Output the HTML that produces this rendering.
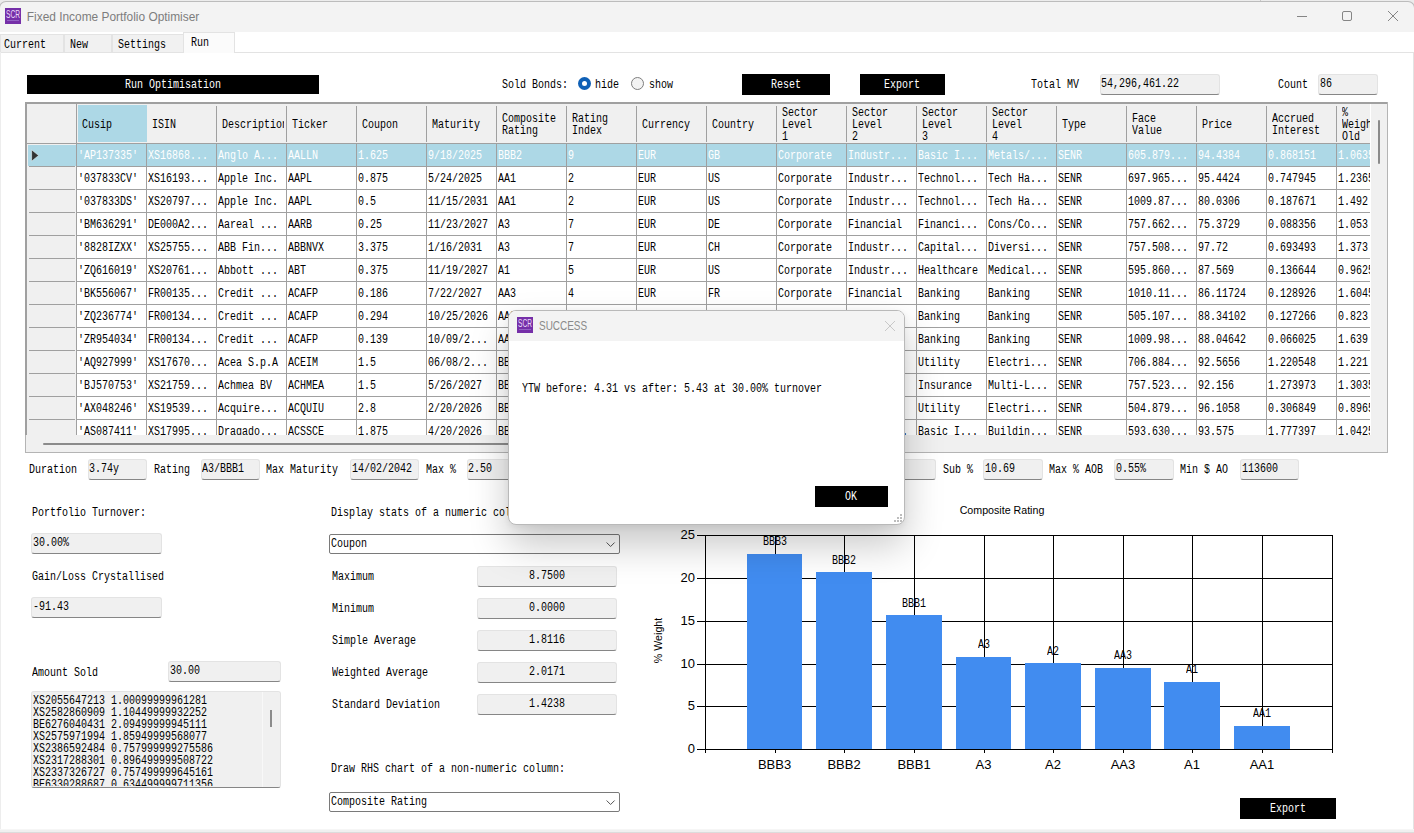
<!DOCTYPE html>
<html lang="en"><head><meta charset="utf-8"><title>Fixed Income Portfolio Optimiser</title>
<style>
html,body{margin:0;padding:0;}
body{width:1414px;height:833px;overflow:hidden;background:#fff;position:relative;font-family:"Liberation Mono",monospace;}
#app{position:absolute;left:0;top:0;width:1414px;height:833px;overflow:hidden;background:#fff;}
#app div,#app span,#app svg{position:absolute;box-sizing:border-box;}
.t{font:12px/12px "Liberation Mono",monospace;white-space:pre;transform:scaleX(.8332);transform-origin:0 0;color:#000;}
.s{font-family:"Liberation Sans",sans-serif;white-space:pre;color:#000;}
.tb{background:#f0f0f0;border:1px solid #e3e3e3;border-bottom-color:#868686;border-radius:3px;}
.cb{background:#fff;border:1px solid #7a7a7a;border-radius:2px;}
.hl{background:#a0a0a0;height:1px;}
.vl{background:#a0a0a0;width:1px;}
</style></head><body><div id="app">

<div style="left:0px;top:0px;width:1414px;height:12px;background:#ececec;"></div>
<div style="left:1260px;top:0px;width:1px;height:1px;background:#c8c8c8;"></div>
<div style="left:-1px;top:1px;width:1416px;height:40px;background:#f3f3f3;border:1px solid #bcbcbc;border-bottom:none;border-radius:7px 7px 0 0;"></div>
<div style="left:5px;top:8px;width:16px;height:16px;background:#752fa8;"><span class="s" style="left:1px;top:2px;font-size:10px;line-height:10px;color:#eadcf8;transform:scaleX(.66);transform-origin:0 0">SCR</span><div style="left:2px;top:12px;width:12px;height:1px;background:#9362c4"></div></div>
<span class="s" id="title" style="left:26.8px;top:10px;font-size:11.9px;line-height:15px;color:#7d7d7d">Fixed Income Portfolio Optimiser</span>
<svg style="left:1290px;top:5px" width="120" height="24" viewBox="0 0 120 24" fill="none" stroke="#858585" stroke-width="1">
<path d="M7 11.5h10"/><rect x="52.5" y="6.5" width="9" height="9" rx="1.5"/><path d="M98 6l10 10M108 6l-10 10"/></svg>
<div style="left:0px;top:32px;width:1414px;height:20px;background:#fff;"></div>
<div style="left:0px;top:34px;width:64px;height:18px;background:#f1f1f1;border:1px solid #e3e3e3;border-bottom:none;"></div>
<span class="t" style="left:3.9px;top:39px;">Current</span>
<div style="left:64px;top:34px;width:48px;height:18px;background:#f1f1f1;border:1px solid #e3e3e3;border-bottom:none;"></div>
<span class="t" style="left:70.1px;top:39px;">New</span>
<div style="left:112px;top:34px;width:72px;height:18px;background:#f1f1f1;border:1px solid #e3e3e3;border-bottom:none;"></div>
<span class="t" style="left:117.9px;top:39px;">Settings</span>
<div style="left:183px;top:32px;width:52px;height:21px;background:#fbfbfb;border:1px solid #e3e3e3;border-bottom:none;"></div>
<span class="t" style="left:190.5px;top:37px;">Run</span>
<div style="left:0px;top:52px;width:183px;height:1px;background:#e3e3e3;"></div>
<div style="left:235px;top:52px;width:1179px;height:1px;background:#e3e3e3;"></div>
<div style="left:0px;top:52px;width:1px;height:778px;background:#ededed;"></div>
<div style="left:1413px;top:52px;width:1px;height:778px;background:#e3e3e3;"></div>
<div style="left:0px;top:829px;width:1414px;height:1px;background:#f6f6f6;"></div>
<div style="left:0px;top:830px;width:1414px;height:2px;background:#f0f0f0;"></div>
<div style="left:0px;top:832px;width:1414px;height:1px;background:#dcdcdc;"></div>
<div style="left:27px;top:75px;width:292px;height:19px;background:#000;"></div>
<span class="t" style="left:124.5px;top:79px;color:#fff;">Run Optimisation</span>
<span class="t" style="left:502.3px;top:79px;">Sold Bonds:</span>
<div style="left:578px;top:77px;width:13px;height:13px;border-radius:50%;background:#0f60b6;"></div>
<div style="left:582px;top:81px;width:5px;height:5px;border-radius:50%;background:#fff;"></div>
<span class="t" style="left:595.3px;top:79px;">hide</span>
<div style="left:631px;top:77px;width:13px;height:13px;border-radius:50%;background:#f3f3f3;border:1px solid #7e7e7e;"></div>
<span class="t" style="left:649.3px;top:79px;">show</span>
<div style="left:742px;top:74px;width:88px;height:21px;background:#000;"></div>
<span class="t" style="left:770.5px;top:79px;color:#fff;">Reset</span>
<div style="left:860px;top:74px;width:85px;height:21px;background:#000;"></div>
<span class="t" style="left:884px;top:79px;color:#fff;">Export</span>
<span class="t" style="left:1031.3px;top:79px;">Total MV</span>
<div class="tb" style="left:1100px;top:74px;width:120px;height:21px;"></div>
<span class="t" style="left:1101.3px;top:78px;">54,296,461.22</span>
<span class="t" style="left:1278.3px;top:79px;">Count</span>
<div class="tb" style="left:1318px;top:74px;width:60px;height:21px;"></div>
<span class="t" style="left:1319.8px;top:78px;">86</span>
<div style="left:25px;top:102px;width:1363px;height:351px;background:#fff;"></div>
<div style="left:27px;top:104px;width:1343px;height:39px;background:#f0f0f0;"></div>
<div style="left:27px;top:143px;width:49px;height:292px;background:#f0f0f0;"></div>
<div style="left:78px;top:105px;width:69px;height:37px;background:#add8e6;"></div>
<div style="left:77px;top:144px;width:1293px;height:22px;background:#add8e6;"></div>
<div style="left:28px;top:145px;width:48px;height:21px;background:#add8e6;"></div>
<div class="vl" style="left:76px;top:104px;width:1px;height:39px;"></div>
<div class="vl" style="left:216px;top:106px;width:1px;height:36px;"></div>
<div class="vl" style="left:286px;top:106px;width:1px;height:36px;"></div>
<div class="vl" style="left:356px;top:106px;width:1px;height:36px;"></div>
<div class="vl" style="left:426px;top:106px;width:1px;height:36px;"></div>
<div class="vl" style="left:496px;top:106px;width:1px;height:36px;"></div>
<div class="vl" style="left:566px;top:106px;width:1px;height:36px;"></div>
<div class="vl" style="left:636px;top:106px;width:1px;height:36px;"></div>
<div class="vl" style="left:706px;top:106px;width:1px;height:36px;"></div>
<div class="vl" style="left:776px;top:106px;width:1px;height:36px;"></div>
<div class="vl" style="left:846px;top:106px;width:1px;height:36px;"></div>
<div class="vl" style="left:916px;top:106px;width:1px;height:36px;"></div>
<div class="vl" style="left:986px;top:106px;width:1px;height:36px;"></div>
<div class="vl" style="left:1056px;top:106px;width:1px;height:36px;"></div>
<div class="vl" style="left:1126px;top:106px;width:1px;height:36px;"></div>
<div class="vl" style="left:1196px;top:106px;width:1px;height:36px;"></div>
<div class="vl" style="left:1266px;top:106px;width:1px;height:36px;"></div>
<div class="vl" style="left:1336px;top:106px;width:1px;height:36px;"></div>
<div class="vl" style="left:76px;top:143px;width:1px;height:292px;"></div>
<div class="vl" style="left:146px;top:143px;width:1px;height:292px;"></div>
<div class="vl" style="left:216px;top:143px;width:1px;height:292px;"></div>
<div class="vl" style="left:286px;top:143px;width:1px;height:292px;"></div>
<div class="vl" style="left:356px;top:143px;width:1px;height:292px;"></div>
<div class="vl" style="left:426px;top:143px;width:1px;height:292px;"></div>
<div class="vl" style="left:496px;top:143px;width:1px;height:292px;"></div>
<div class="vl" style="left:566px;top:143px;width:1px;height:292px;"></div>
<div class="vl" style="left:636px;top:143px;width:1px;height:292px;"></div>
<div class="vl" style="left:706px;top:143px;width:1px;height:292px;"></div>
<div class="vl" style="left:776px;top:143px;width:1px;height:292px;"></div>
<div class="vl" style="left:846px;top:143px;width:1px;height:292px;"></div>
<div class="vl" style="left:916px;top:143px;width:1px;height:292px;"></div>
<div class="vl" style="left:986px;top:143px;width:1px;height:292px;"></div>
<div class="vl" style="left:1056px;top:143px;width:1px;height:292px;"></div>
<div class="vl" style="left:1126px;top:143px;width:1px;height:292px;"></div>
<div class="vl" style="left:1196px;top:143px;width:1px;height:292px;"></div>
<div class="vl" style="left:1266px;top:143px;width:1px;height:292px;"></div>
<div class="vl" style="left:1336px;top:143px;width:1px;height:292px;"></div>
<div class="hl" style="left:27px;top:143px;width:1343px;height:1px;"></div>
<div class="hl" style="left:76px;top:166px;width:1294px;height:1px;"></div>
<div class="hl" style="left:29px;top:166px;width:46px;height:1px;"></div>
<div class="hl" style="left:76px;top:189px;width:1294px;height:1px;"></div>
<div class="hl" style="left:29px;top:189px;width:46px;height:1px;"></div>
<div class="hl" style="left:76px;top:212px;width:1294px;height:1px;"></div>
<div class="hl" style="left:29px;top:212px;width:46px;height:1px;"></div>
<div class="hl" style="left:76px;top:235px;width:1294px;height:1px;"></div>
<div class="hl" style="left:29px;top:235px;width:46px;height:1px;"></div>
<div class="hl" style="left:76px;top:258px;width:1294px;height:1px;"></div>
<div class="hl" style="left:29px;top:258px;width:46px;height:1px;"></div>
<div class="hl" style="left:76px;top:281px;width:1294px;height:1px;"></div>
<div class="hl" style="left:29px;top:281px;width:46px;height:1px;"></div>
<div class="hl" style="left:76px;top:304px;width:1294px;height:1px;"></div>
<div class="hl" style="left:29px;top:304px;width:46px;height:1px;"></div>
<div class="hl" style="left:76px;top:327px;width:1294px;height:1px;"></div>
<div class="hl" style="left:29px;top:327px;width:46px;height:1px;"></div>
<div class="hl" style="left:76px;top:350px;width:1294px;height:1px;"></div>
<div class="hl" style="left:29px;top:350px;width:46px;height:1px;"></div>
<div class="hl" style="left:76px;top:373px;width:1294px;height:1px;"></div>
<div class="hl" style="left:29px;top:373px;width:46px;height:1px;"></div>
<div class="hl" style="left:76px;top:396px;width:1294px;height:1px;"></div>
<div class="hl" style="left:29px;top:396px;width:46px;height:1px;"></div>
<div class="hl" style="left:76px;top:419px;width:1294px;height:1px;"></div>
<div class="hl" style="left:29px;top:419px;width:46px;height:1px;"></div>
<svg style="left:31px;top:149px" width="9" height="13" viewBox="0 0 9 13"><path d="M0.6 0.8L7.6 6.5L0.6 12.2z" fill="#333" stroke="#e4f2f7" stroke-width="0.6"/></svg>
<div style="left:77px;top:104px;width:67px;height:39px;overflow:hidden"><span class="t" style="left:5px;top:15px">Cusip</span></div>
<div style="left:147px;top:104px;width:67px;height:39px;overflow:hidden"><span class="t" style="left:5px;top:15px">ISIN</span></div>
<div style="left:217px;top:104px;width:67px;height:39px;overflow:hidden"><span class="t" style="left:5px;top:15px">Description</span></div>
<div style="left:287px;top:104px;width:67px;height:39px;overflow:hidden"><span class="t" style="left:5px;top:15px">Ticker</span></div>
<div style="left:357px;top:104px;width:67px;height:39px;overflow:hidden"><span class="t" style="left:5px;top:15px">Coupon</span></div>
<div style="left:427px;top:104px;width:67px;height:39px;overflow:hidden"><span class="t" style="left:5px;top:15px">Maturity</span></div>
<div style="left:497px;top:104px;width:67px;height:39px;overflow:hidden"><span class="t" style="left:5px;top:9px">Composite</span><span class="t" style="left:5px;top:21px">Rating</span></div>
<div style="left:567px;top:104px;width:67px;height:39px;overflow:hidden"><span class="t" style="left:5px;top:9px">Rating</span><span class="t" style="left:5px;top:21px">Index</span></div>
<div style="left:637px;top:104px;width:67px;height:39px;overflow:hidden"><span class="t" style="left:5px;top:15px">Currency</span></div>
<div style="left:707px;top:104px;width:67px;height:39px;overflow:hidden"><span class="t" style="left:5px;top:15px">Country</span></div>
<div style="left:777px;top:104px;width:67px;height:39px;overflow:hidden"><span class="t" style="left:5px;top:3px">Sector</span><span class="t" style="left:5px;top:15px">Level</span><span class="t" style="left:5px;top:27px">1</span></div>
<div style="left:847px;top:104px;width:67px;height:39px;overflow:hidden"><span class="t" style="left:5px;top:3px">Sector</span><span class="t" style="left:5px;top:15px">Level</span><span class="t" style="left:5px;top:27px">2</span></div>
<div style="left:917px;top:104px;width:67px;height:39px;overflow:hidden"><span class="t" style="left:5px;top:3px">Sector</span><span class="t" style="left:5px;top:15px">Level</span><span class="t" style="left:5px;top:27px">3</span></div>
<div style="left:987px;top:104px;width:67px;height:39px;overflow:hidden"><span class="t" style="left:5px;top:3px">Sector</span><span class="t" style="left:5px;top:15px">Level</span><span class="t" style="left:5px;top:27px">4</span></div>
<div style="left:1057px;top:104px;width:67px;height:39px;overflow:hidden"><span class="t" style="left:5px;top:15px">Type</span></div>
<div style="left:1127px;top:104px;width:67px;height:39px;overflow:hidden"><span class="t" style="left:5px;top:9px">Face</span><span class="t" style="left:5px;top:21px">Value</span></div>
<div style="left:1197px;top:104px;width:67px;height:39px;overflow:hidden"><span class="t" style="left:5px;top:15px">Price</span></div>
<div style="left:1267px;top:104px;width:67px;height:39px;overflow:hidden"><span class="t" style="left:5px;top:9px">Accrued</span><span class="t" style="left:5px;top:21px">Interest</span></div>
<div style="left:1337px;top:104px;width:33px;height:39px;overflow:hidden"><span class="t" style="left:5px;top:3px">%</span><span class="t" style="left:5px;top:15px">Weight</span><span class="t" style="left:5px;top:27px">Old</span></div>
<div style="left:77px;top:144px;width:69px;height:22px;overflow:hidden"><span class="t" style="left:1.3px;top:6px;color:#fff">'AP137335'</span></div>
<div style="left:147px;top:144px;width:69px;height:22px;overflow:hidden"><span class="t" style="left:1.3px;top:6px;color:#fff">XS16868...</span></div>
<div style="left:217px;top:144px;width:69px;height:22px;overflow:hidden"><span class="t" style="left:1.3px;top:6px;color:#fff">Anglo A...</span></div>
<div style="left:287px;top:144px;width:69px;height:22px;overflow:hidden"><span class="t" style="left:1.3px;top:6px;color:#fff">AALLN</span></div>
<div style="left:357px;top:144px;width:69px;height:22px;overflow:hidden"><span class="t" style="left:1.3px;top:6px;color:#fff">1.625</span></div>
<div style="left:427px;top:144px;width:69px;height:22px;overflow:hidden"><span class="t" style="left:1.3px;top:6px;color:#fff">9/18/2025</span></div>
<div style="left:497px;top:144px;width:69px;height:22px;overflow:hidden"><span class="t" style="left:1.3px;top:6px;color:#fff">BBB2</span></div>
<div style="left:567px;top:144px;width:69px;height:22px;overflow:hidden"><span class="t" style="left:1.3px;top:6px;color:#fff">9</span></div>
<div style="left:637px;top:144px;width:69px;height:22px;overflow:hidden"><span class="t" style="left:1.3px;top:6px;color:#fff">EUR</span></div>
<div style="left:707px;top:144px;width:69px;height:22px;overflow:hidden"><span class="t" style="left:1.3px;top:6px;color:#fff">GB</span></div>
<div style="left:777px;top:144px;width:69px;height:22px;overflow:hidden"><span class="t" style="left:1.3px;top:6px;color:#fff">Corporate</span></div>
<div style="left:847px;top:144px;width:69px;height:22px;overflow:hidden"><span class="t" style="left:1.3px;top:6px;color:#fff">Industr...</span></div>
<div style="left:917px;top:144px;width:69px;height:22px;overflow:hidden"><span class="t" style="left:1.3px;top:6px;color:#fff">Basic I...</span></div>
<div style="left:987px;top:144px;width:69px;height:22px;overflow:hidden"><span class="t" style="left:1.3px;top:6px;color:#fff">Metals/...</span></div>
<div style="left:1057px;top:144px;width:69px;height:22px;overflow:hidden"><span class="t" style="left:1.3px;top:6px;color:#fff">SENR</span></div>
<div style="left:1127px;top:144px;width:69px;height:22px;overflow:hidden"><span class="t" style="left:1.3px;top:6px;color:#fff">605.879...</span></div>
<div style="left:1197px;top:144px;width:69px;height:22px;overflow:hidden"><span class="t" style="left:1.3px;top:6px;color:#fff">94.4384</span></div>
<div style="left:1267px;top:144px;width:69px;height:22px;overflow:hidden"><span class="t" style="left:1.3px;top:6px;color:#fff">0.868151</span></div>
<div style="left:1337px;top:144px;width:33px;height:22px;overflow:hidden"><span class="t" style="left:1.3px;top:6px;color:#fff">1.0635</span></div>
<div style="left:77px;top:167px;width:69px;height:22px;overflow:hidden"><span class="t" style="left:1.3px;top:6px;color:#000">'037833CV'</span></div>
<div style="left:147px;top:167px;width:69px;height:22px;overflow:hidden"><span class="t" style="left:1.3px;top:6px;color:#000">XS16193...</span></div>
<div style="left:217px;top:167px;width:69px;height:22px;overflow:hidden"><span class="t" style="left:1.3px;top:6px;color:#000">Apple Inc.</span></div>
<div style="left:287px;top:167px;width:69px;height:22px;overflow:hidden"><span class="t" style="left:1.3px;top:6px;color:#000">AAPL</span></div>
<div style="left:357px;top:167px;width:69px;height:22px;overflow:hidden"><span class="t" style="left:1.3px;top:6px;color:#000">0.875</span></div>
<div style="left:427px;top:167px;width:69px;height:22px;overflow:hidden"><span class="t" style="left:1.3px;top:6px;color:#000">5/24/2025</span></div>
<div style="left:497px;top:167px;width:69px;height:22px;overflow:hidden"><span class="t" style="left:1.3px;top:6px;color:#000">AA1</span></div>
<div style="left:567px;top:167px;width:69px;height:22px;overflow:hidden"><span class="t" style="left:1.3px;top:6px;color:#000">2</span></div>
<div style="left:637px;top:167px;width:69px;height:22px;overflow:hidden"><span class="t" style="left:1.3px;top:6px;color:#000">EUR</span></div>
<div style="left:707px;top:167px;width:69px;height:22px;overflow:hidden"><span class="t" style="left:1.3px;top:6px;color:#000">US</span></div>
<div style="left:777px;top:167px;width:69px;height:22px;overflow:hidden"><span class="t" style="left:1.3px;top:6px;color:#000">Corporate</span></div>
<div style="left:847px;top:167px;width:69px;height:22px;overflow:hidden"><span class="t" style="left:1.3px;top:6px;color:#000">Industr...</span></div>
<div style="left:917px;top:167px;width:69px;height:22px;overflow:hidden"><span class="t" style="left:1.3px;top:6px;color:#000">Technol...</span></div>
<div style="left:987px;top:167px;width:69px;height:22px;overflow:hidden"><span class="t" style="left:1.3px;top:6px;color:#000">Tech Ha...</span></div>
<div style="left:1057px;top:167px;width:69px;height:22px;overflow:hidden"><span class="t" style="left:1.3px;top:6px;color:#000">SENR</span></div>
<div style="left:1127px;top:167px;width:69px;height:22px;overflow:hidden"><span class="t" style="left:1.3px;top:6px;color:#000">697.965...</span></div>
<div style="left:1197px;top:167px;width:69px;height:22px;overflow:hidden"><span class="t" style="left:1.3px;top:6px;color:#000">95.4424</span></div>
<div style="left:1267px;top:167px;width:69px;height:22px;overflow:hidden"><span class="t" style="left:1.3px;top:6px;color:#000">0.747945</span></div>
<div style="left:1337px;top:167px;width:33px;height:22px;overflow:hidden"><span class="t" style="left:1.3px;top:6px;color:#000">1.2365</span></div>
<div style="left:77px;top:190px;width:69px;height:22px;overflow:hidden"><span class="t" style="left:1.3px;top:6px;color:#000">'037833DS'</span></div>
<div style="left:147px;top:190px;width:69px;height:22px;overflow:hidden"><span class="t" style="left:1.3px;top:6px;color:#000">XS20797...</span></div>
<div style="left:217px;top:190px;width:69px;height:22px;overflow:hidden"><span class="t" style="left:1.3px;top:6px;color:#000">Apple Inc.</span></div>
<div style="left:287px;top:190px;width:69px;height:22px;overflow:hidden"><span class="t" style="left:1.3px;top:6px;color:#000">AAPL</span></div>
<div style="left:357px;top:190px;width:69px;height:22px;overflow:hidden"><span class="t" style="left:1.3px;top:6px;color:#000">0.5</span></div>
<div style="left:427px;top:190px;width:69px;height:22px;overflow:hidden"><span class="t" style="left:1.3px;top:6px;color:#000">11/15/2031</span></div>
<div style="left:497px;top:190px;width:69px;height:22px;overflow:hidden"><span class="t" style="left:1.3px;top:6px;color:#000">AA1</span></div>
<div style="left:567px;top:190px;width:69px;height:22px;overflow:hidden"><span class="t" style="left:1.3px;top:6px;color:#000">2</span></div>
<div style="left:637px;top:190px;width:69px;height:22px;overflow:hidden"><span class="t" style="left:1.3px;top:6px;color:#000">EUR</span></div>
<div style="left:707px;top:190px;width:69px;height:22px;overflow:hidden"><span class="t" style="left:1.3px;top:6px;color:#000">US</span></div>
<div style="left:777px;top:190px;width:69px;height:22px;overflow:hidden"><span class="t" style="left:1.3px;top:6px;color:#000">Corporate</span></div>
<div style="left:847px;top:190px;width:69px;height:22px;overflow:hidden"><span class="t" style="left:1.3px;top:6px;color:#000">Industr...</span></div>
<div style="left:917px;top:190px;width:69px;height:22px;overflow:hidden"><span class="t" style="left:1.3px;top:6px;color:#000">Technol...</span></div>
<div style="left:987px;top:190px;width:69px;height:22px;overflow:hidden"><span class="t" style="left:1.3px;top:6px;color:#000">Tech Ha...</span></div>
<div style="left:1057px;top:190px;width:69px;height:22px;overflow:hidden"><span class="t" style="left:1.3px;top:6px;color:#000">SENR</span></div>
<div style="left:1127px;top:190px;width:69px;height:22px;overflow:hidden"><span class="t" style="left:1.3px;top:6px;color:#000">1009.87...</span></div>
<div style="left:1197px;top:190px;width:69px;height:22px;overflow:hidden"><span class="t" style="left:1.3px;top:6px;color:#000">80.0306</span></div>
<div style="left:1267px;top:190px;width:69px;height:22px;overflow:hidden"><span class="t" style="left:1.3px;top:6px;color:#000">0.187671</span></div>
<div style="left:1337px;top:190px;width:33px;height:22px;overflow:hidden"><span class="t" style="left:1.3px;top:6px;color:#000">1.492</span></div>
<div style="left:77px;top:213px;width:69px;height:22px;overflow:hidden"><span class="t" style="left:1.3px;top:6px;color:#000">'BM636291'</span></div>
<div style="left:147px;top:213px;width:69px;height:22px;overflow:hidden"><span class="t" style="left:1.3px;top:6px;color:#000">DE000A2...</span></div>
<div style="left:217px;top:213px;width:69px;height:22px;overflow:hidden"><span class="t" style="left:1.3px;top:6px;color:#000">Aareal ...</span></div>
<div style="left:287px;top:213px;width:69px;height:22px;overflow:hidden"><span class="t" style="left:1.3px;top:6px;color:#000">AARB</span></div>
<div style="left:357px;top:213px;width:69px;height:22px;overflow:hidden"><span class="t" style="left:1.3px;top:6px;color:#000">0.25</span></div>
<div style="left:427px;top:213px;width:69px;height:22px;overflow:hidden"><span class="t" style="left:1.3px;top:6px;color:#000">11/23/2027</span></div>
<div style="left:497px;top:213px;width:69px;height:22px;overflow:hidden"><span class="t" style="left:1.3px;top:6px;color:#000">A3</span></div>
<div style="left:567px;top:213px;width:69px;height:22px;overflow:hidden"><span class="t" style="left:1.3px;top:6px;color:#000">7</span></div>
<div style="left:637px;top:213px;width:69px;height:22px;overflow:hidden"><span class="t" style="left:1.3px;top:6px;color:#000">EUR</span></div>
<div style="left:707px;top:213px;width:69px;height:22px;overflow:hidden"><span class="t" style="left:1.3px;top:6px;color:#000">DE</span></div>
<div style="left:777px;top:213px;width:69px;height:22px;overflow:hidden"><span class="t" style="left:1.3px;top:6px;color:#000">Corporate</span></div>
<div style="left:847px;top:213px;width:69px;height:22px;overflow:hidden"><span class="t" style="left:1.3px;top:6px;color:#000">Financial</span></div>
<div style="left:917px;top:213px;width:69px;height:22px;overflow:hidden"><span class="t" style="left:1.3px;top:6px;color:#000">Financi...</span></div>
<div style="left:987px;top:213px;width:69px;height:22px;overflow:hidden"><span class="t" style="left:1.3px;top:6px;color:#000">Cons/Co...</span></div>
<div style="left:1057px;top:213px;width:69px;height:22px;overflow:hidden"><span class="t" style="left:1.3px;top:6px;color:#000">SENR</span></div>
<div style="left:1127px;top:213px;width:69px;height:22px;overflow:hidden"><span class="t" style="left:1.3px;top:6px;color:#000">757.662...</span></div>
<div style="left:1197px;top:213px;width:69px;height:22px;overflow:hidden"><span class="t" style="left:1.3px;top:6px;color:#000">75.3729</span></div>
<div style="left:1267px;top:213px;width:69px;height:22px;overflow:hidden"><span class="t" style="left:1.3px;top:6px;color:#000">0.088356</span></div>
<div style="left:1337px;top:213px;width:33px;height:22px;overflow:hidden"><span class="t" style="left:1.3px;top:6px;color:#000">1.053</span></div>
<div style="left:77px;top:236px;width:69px;height:22px;overflow:hidden"><span class="t" style="left:1.3px;top:6px;color:#000">'8828IZXX'</span></div>
<div style="left:147px;top:236px;width:69px;height:22px;overflow:hidden"><span class="t" style="left:1.3px;top:6px;color:#000">XS25755...</span></div>
<div style="left:217px;top:236px;width:69px;height:22px;overflow:hidden"><span class="t" style="left:1.3px;top:6px;color:#000">ABB Fin...</span></div>
<div style="left:287px;top:236px;width:69px;height:22px;overflow:hidden"><span class="t" style="left:1.3px;top:6px;color:#000">ABBNVX</span></div>
<div style="left:357px;top:236px;width:69px;height:22px;overflow:hidden"><span class="t" style="left:1.3px;top:6px;color:#000">3.375</span></div>
<div style="left:427px;top:236px;width:69px;height:22px;overflow:hidden"><span class="t" style="left:1.3px;top:6px;color:#000">1/16/2031</span></div>
<div style="left:497px;top:236px;width:69px;height:22px;overflow:hidden"><span class="t" style="left:1.3px;top:6px;color:#000">A3</span></div>
<div style="left:567px;top:236px;width:69px;height:22px;overflow:hidden"><span class="t" style="left:1.3px;top:6px;color:#000">7</span></div>
<div style="left:637px;top:236px;width:69px;height:22px;overflow:hidden"><span class="t" style="left:1.3px;top:6px;color:#000">EUR</span></div>
<div style="left:707px;top:236px;width:69px;height:22px;overflow:hidden"><span class="t" style="left:1.3px;top:6px;color:#000">CH</span></div>
<div style="left:777px;top:236px;width:69px;height:22px;overflow:hidden"><span class="t" style="left:1.3px;top:6px;color:#000">Corporate</span></div>
<div style="left:847px;top:236px;width:69px;height:22px;overflow:hidden"><span class="t" style="left:1.3px;top:6px;color:#000">Industr...</span></div>
<div style="left:917px;top:236px;width:69px;height:22px;overflow:hidden"><span class="t" style="left:1.3px;top:6px;color:#000">Capital...</span></div>
<div style="left:987px;top:236px;width:69px;height:22px;overflow:hidden"><span class="t" style="left:1.3px;top:6px;color:#000">Diversi...</span></div>
<div style="left:1057px;top:236px;width:69px;height:22px;overflow:hidden"><span class="t" style="left:1.3px;top:6px;color:#000">SENR</span></div>
<div style="left:1127px;top:236px;width:69px;height:22px;overflow:hidden"><span class="t" style="left:1.3px;top:6px;color:#000">757.508...</span></div>
<div style="left:1197px;top:236px;width:69px;height:22px;overflow:hidden"><span class="t" style="left:1.3px;top:6px;color:#000">97.72</span></div>
<div style="left:1267px;top:236px;width:69px;height:22px;overflow:hidden"><span class="t" style="left:1.3px;top:6px;color:#000">0.693493</span></div>
<div style="left:1337px;top:236px;width:33px;height:22px;overflow:hidden"><span class="t" style="left:1.3px;top:6px;color:#000">1.373</span></div>
<div style="left:77px;top:259px;width:69px;height:22px;overflow:hidden"><span class="t" style="left:1.3px;top:6px;color:#000">'ZQ616019'</span></div>
<div style="left:147px;top:259px;width:69px;height:22px;overflow:hidden"><span class="t" style="left:1.3px;top:6px;color:#000">XS20761...</span></div>
<div style="left:217px;top:259px;width:69px;height:22px;overflow:hidden"><span class="t" style="left:1.3px;top:6px;color:#000">Abbott ...</span></div>
<div style="left:287px;top:259px;width:69px;height:22px;overflow:hidden"><span class="t" style="left:1.3px;top:6px;color:#000">ABT</span></div>
<div style="left:357px;top:259px;width:69px;height:22px;overflow:hidden"><span class="t" style="left:1.3px;top:6px;color:#000">0.375</span></div>
<div style="left:427px;top:259px;width:69px;height:22px;overflow:hidden"><span class="t" style="left:1.3px;top:6px;color:#000">11/19/2027</span></div>
<div style="left:497px;top:259px;width:69px;height:22px;overflow:hidden"><span class="t" style="left:1.3px;top:6px;color:#000">A1</span></div>
<div style="left:567px;top:259px;width:69px;height:22px;overflow:hidden"><span class="t" style="left:1.3px;top:6px;color:#000">5</span></div>
<div style="left:637px;top:259px;width:69px;height:22px;overflow:hidden"><span class="t" style="left:1.3px;top:6px;color:#000">EUR</span></div>
<div style="left:707px;top:259px;width:69px;height:22px;overflow:hidden"><span class="t" style="left:1.3px;top:6px;color:#000">US</span></div>
<div style="left:777px;top:259px;width:69px;height:22px;overflow:hidden"><span class="t" style="left:1.3px;top:6px;color:#000">Corporate</span></div>
<div style="left:847px;top:259px;width:69px;height:22px;overflow:hidden"><span class="t" style="left:1.3px;top:6px;color:#000">Industr...</span></div>
<div style="left:917px;top:259px;width:69px;height:22px;overflow:hidden"><span class="t" style="left:1.3px;top:6px;color:#000">Healthcare</span></div>
<div style="left:987px;top:259px;width:69px;height:22px;overflow:hidden"><span class="t" style="left:1.3px;top:6px;color:#000">Medical...</span></div>
<div style="left:1057px;top:259px;width:69px;height:22px;overflow:hidden"><span class="t" style="left:1.3px;top:6px;color:#000">SENR</span></div>
<div style="left:1127px;top:259px;width:69px;height:22px;overflow:hidden"><span class="t" style="left:1.3px;top:6px;color:#000">595.860...</span></div>
<div style="left:1197px;top:259px;width:69px;height:22px;overflow:hidden"><span class="t" style="left:1.3px;top:6px;color:#000">87.569</span></div>
<div style="left:1267px;top:259px;width:69px;height:22px;overflow:hidden"><span class="t" style="left:1.3px;top:6px;color:#000">0.136644</span></div>
<div style="left:1337px;top:259px;width:33px;height:22px;overflow:hidden"><span class="t" style="left:1.3px;top:6px;color:#000">0.9625</span></div>
<div style="left:77px;top:282px;width:69px;height:22px;overflow:hidden"><span class="t" style="left:1.3px;top:6px;color:#000">'BK556067'</span></div>
<div style="left:147px;top:282px;width:69px;height:22px;overflow:hidden"><span class="t" style="left:1.3px;top:6px;color:#000">FR00135...</span></div>
<div style="left:217px;top:282px;width:69px;height:22px;overflow:hidden"><span class="t" style="left:1.3px;top:6px;color:#000">Credit ...</span></div>
<div style="left:287px;top:282px;width:69px;height:22px;overflow:hidden"><span class="t" style="left:1.3px;top:6px;color:#000">ACAFP</span></div>
<div style="left:357px;top:282px;width:69px;height:22px;overflow:hidden"><span class="t" style="left:1.3px;top:6px;color:#000">0.186</span></div>
<div style="left:427px;top:282px;width:69px;height:22px;overflow:hidden"><span class="t" style="left:1.3px;top:6px;color:#000">7/22/2027</span></div>
<div style="left:497px;top:282px;width:69px;height:22px;overflow:hidden"><span class="t" style="left:1.3px;top:6px;color:#000">AA3</span></div>
<div style="left:567px;top:282px;width:69px;height:22px;overflow:hidden"><span class="t" style="left:1.3px;top:6px;color:#000">4</span></div>
<div style="left:637px;top:282px;width:69px;height:22px;overflow:hidden"><span class="t" style="left:1.3px;top:6px;color:#000">EUR</span></div>
<div style="left:707px;top:282px;width:69px;height:22px;overflow:hidden"><span class="t" style="left:1.3px;top:6px;color:#000">FR</span></div>
<div style="left:777px;top:282px;width:69px;height:22px;overflow:hidden"><span class="t" style="left:1.3px;top:6px;color:#000">Corporate</span></div>
<div style="left:847px;top:282px;width:69px;height:22px;overflow:hidden"><span class="t" style="left:1.3px;top:6px;color:#000">Financial</span></div>
<div style="left:917px;top:282px;width:69px;height:22px;overflow:hidden"><span class="t" style="left:1.3px;top:6px;color:#000">Banking</span></div>
<div style="left:987px;top:282px;width:69px;height:22px;overflow:hidden"><span class="t" style="left:1.3px;top:6px;color:#000">Banking</span></div>
<div style="left:1057px;top:282px;width:69px;height:22px;overflow:hidden"><span class="t" style="left:1.3px;top:6px;color:#000">SENR</span></div>
<div style="left:1127px;top:282px;width:69px;height:22px;overflow:hidden"><span class="t" style="left:1.3px;top:6px;color:#000">1010.11...</span></div>
<div style="left:1197px;top:282px;width:69px;height:22px;overflow:hidden"><span class="t" style="left:1.3px;top:6px;color:#000">86.11724</span></div>
<div style="left:1267px;top:282px;width:69px;height:22px;overflow:hidden"><span class="t" style="left:1.3px;top:6px;color:#000">0.128926</span></div>
<div style="left:1337px;top:282px;width:33px;height:22px;overflow:hidden"><span class="t" style="left:1.3px;top:6px;color:#000">1.6045</span></div>
<div style="left:77px;top:305px;width:69px;height:22px;overflow:hidden"><span class="t" style="left:1.3px;top:6px;color:#000">'ZQ236774'</span></div>
<div style="left:147px;top:305px;width:69px;height:22px;overflow:hidden"><span class="t" style="left:1.3px;top:6px;color:#000">FR00134...</span></div>
<div style="left:217px;top:305px;width:69px;height:22px;overflow:hidden"><span class="t" style="left:1.3px;top:6px;color:#000">Credit ...</span></div>
<div style="left:287px;top:305px;width:69px;height:22px;overflow:hidden"><span class="t" style="left:1.3px;top:6px;color:#000">ACAFP</span></div>
<div style="left:357px;top:305px;width:69px;height:22px;overflow:hidden"><span class="t" style="left:1.3px;top:6px;color:#000">0.294</span></div>
<div style="left:427px;top:305px;width:69px;height:22px;overflow:hidden"><span class="t" style="left:1.3px;top:6px;color:#000">10/25/2026</span></div>
<div style="left:497px;top:305px;width:69px;height:22px;overflow:hidden"><span class="t" style="left:1.3px;top:6px;color:#000">AA3</span></div>
<div style="left:567px;top:305px;width:69px;height:22px;overflow:hidden"><span class="t" style="left:1.3px;top:6px;color:#000">4</span></div>
<div style="left:637px;top:305px;width:69px;height:22px;overflow:hidden"><span class="t" style="left:1.3px;top:6px;color:#000">EUR</span></div>
<div style="left:707px;top:305px;width:69px;height:22px;overflow:hidden"><span class="t" style="left:1.3px;top:6px;color:#000">FR</span></div>
<div style="left:777px;top:305px;width:69px;height:22px;overflow:hidden"><span class="t" style="left:1.3px;top:6px;color:#000">Corporate</span></div>
<div style="left:847px;top:305px;width:69px;height:22px;overflow:hidden"><span class="t" style="left:1.3px;top:6px;color:#000">Financial</span></div>
<div style="left:917px;top:305px;width:69px;height:22px;overflow:hidden"><span class="t" style="left:1.3px;top:6px;color:#000">Banking</span></div>
<div style="left:987px;top:305px;width:69px;height:22px;overflow:hidden"><span class="t" style="left:1.3px;top:6px;color:#000">Banking</span></div>
<div style="left:1057px;top:305px;width:69px;height:22px;overflow:hidden"><span class="t" style="left:1.3px;top:6px;color:#000">SENR</span></div>
<div style="left:1127px;top:305px;width:69px;height:22px;overflow:hidden"><span class="t" style="left:1.3px;top:6px;color:#000">505.107...</span></div>
<div style="left:1197px;top:305px;width:69px;height:22px;overflow:hidden"><span class="t" style="left:1.3px;top:6px;color:#000">88.34102</span></div>
<div style="left:1267px;top:305px;width:69px;height:22px;overflow:hidden"><span class="t" style="left:1.3px;top:6px;color:#000">0.127266</span></div>
<div style="left:1337px;top:305px;width:33px;height:22px;overflow:hidden"><span class="t" style="left:1.3px;top:6px;color:#000">0.823</span></div>
<div style="left:77px;top:328px;width:69px;height:22px;overflow:hidden"><span class="t" style="left:1.3px;top:6px;color:#000">'ZR954034'</span></div>
<div style="left:147px;top:328px;width:69px;height:22px;overflow:hidden"><span class="t" style="left:1.3px;top:6px;color:#000">FR00134...</span></div>
<div style="left:217px;top:328px;width:69px;height:22px;overflow:hidden"><span class="t" style="left:1.3px;top:6px;color:#000">Credit ...</span></div>
<div style="left:287px;top:328px;width:69px;height:22px;overflow:hidden"><span class="t" style="left:1.3px;top:6px;color:#000">ACAFP</span></div>
<div style="left:357px;top:328px;width:69px;height:22px;overflow:hidden"><span class="t" style="left:1.3px;top:6px;color:#000">0.139</span></div>
<div style="left:427px;top:328px;width:69px;height:22px;overflow:hidden"><span class="t" style="left:1.3px;top:6px;color:#000">10/09/2...</span></div>
<div style="left:497px;top:328px;width:69px;height:22px;overflow:hidden"><span class="t" style="left:1.3px;top:6px;color:#000">AA3</span></div>
<div style="left:567px;top:328px;width:69px;height:22px;overflow:hidden"><span class="t" style="left:1.3px;top:6px;color:#000">4</span></div>
<div style="left:637px;top:328px;width:69px;height:22px;overflow:hidden"><span class="t" style="left:1.3px;top:6px;color:#000">EUR</span></div>
<div style="left:707px;top:328px;width:69px;height:22px;overflow:hidden"><span class="t" style="left:1.3px;top:6px;color:#000">FR</span></div>
<div style="left:777px;top:328px;width:69px;height:22px;overflow:hidden"><span class="t" style="left:1.3px;top:6px;color:#000">Corporate</span></div>
<div style="left:847px;top:328px;width:69px;height:22px;overflow:hidden"><span class="t" style="left:1.3px;top:6px;color:#000">Financial</span></div>
<div style="left:917px;top:328px;width:69px;height:22px;overflow:hidden"><span class="t" style="left:1.3px;top:6px;color:#000">Banking</span></div>
<div style="left:987px;top:328px;width:69px;height:22px;overflow:hidden"><span class="t" style="left:1.3px;top:6px;color:#000">Banking</span></div>
<div style="left:1057px;top:328px;width:69px;height:22px;overflow:hidden"><span class="t" style="left:1.3px;top:6px;color:#000">SENR</span></div>
<div style="left:1127px;top:328px;width:69px;height:22px;overflow:hidden"><span class="t" style="left:1.3px;top:6px;color:#000">1009.98...</span></div>
<div style="left:1197px;top:328px;width:69px;height:22px;overflow:hidden"><span class="t" style="left:1.3px;top:6px;color:#000">88.04642</span></div>
<div style="left:1267px;top:328px;width:69px;height:22px;overflow:hidden"><span class="t" style="left:1.3px;top:6px;color:#000">0.066025</span></div>
<div style="left:1337px;top:328px;width:33px;height:22px;overflow:hidden"><span class="t" style="left:1.3px;top:6px;color:#000">1.639</span></div>
<div style="left:77px;top:351px;width:69px;height:22px;overflow:hidden"><span class="t" style="left:1.3px;top:6px;color:#000">'AQ927999'</span></div>
<div style="left:147px;top:351px;width:69px;height:22px;overflow:hidden"><span class="t" style="left:1.3px;top:6px;color:#000">XS17670...</span></div>
<div style="left:217px;top:351px;width:69px;height:22px;overflow:hidden"><span class="t" style="left:1.3px;top:6px;color:#000">Acea S.p.A</span></div>
<div style="left:287px;top:351px;width:69px;height:22px;overflow:hidden"><span class="t" style="left:1.3px;top:6px;color:#000">ACEIM</span></div>
<div style="left:357px;top:351px;width:69px;height:22px;overflow:hidden"><span class="t" style="left:1.3px;top:6px;color:#000">1.5</span></div>
<div style="left:427px;top:351px;width:69px;height:22px;overflow:hidden"><span class="t" style="left:1.3px;top:6px;color:#000">06/08/2...</span></div>
<div style="left:497px;top:351px;width:69px;height:22px;overflow:hidden"><span class="t" style="left:1.3px;top:6px;color:#000">BBB2</span></div>
<div style="left:567px;top:351px;width:69px;height:22px;overflow:hidden"><span class="t" style="left:1.3px;top:6px;color:#000">9</span></div>
<div style="left:637px;top:351px;width:69px;height:22px;overflow:hidden"><span class="t" style="left:1.3px;top:6px;color:#000">EUR</span></div>
<div style="left:707px;top:351px;width:69px;height:22px;overflow:hidden"><span class="t" style="left:1.3px;top:6px;color:#000">IT</span></div>
<div style="left:777px;top:351px;width:69px;height:22px;overflow:hidden"><span class="t" style="left:1.3px;top:6px;color:#000">Corporate</span></div>
<div style="left:847px;top:351px;width:69px;height:22px;overflow:hidden"><span class="t" style="left:1.3px;top:6px;color:#000">Utility</span></div>
<div style="left:917px;top:351px;width:69px;height:22px;overflow:hidden"><span class="t" style="left:1.3px;top:6px;color:#000">Utility</span></div>
<div style="left:987px;top:351px;width:69px;height:22px;overflow:hidden"><span class="t" style="left:1.3px;top:6px;color:#000">Electri...</span></div>
<div style="left:1057px;top:351px;width:69px;height:22px;overflow:hidden"><span class="t" style="left:1.3px;top:6px;color:#000">SENR</span></div>
<div style="left:1127px;top:351px;width:69px;height:22px;overflow:hidden"><span class="t" style="left:1.3px;top:6px;color:#000">706.884...</span></div>
<div style="left:1197px;top:351px;width:69px;height:22px;overflow:hidden"><span class="t" style="left:1.3px;top:6px;color:#000">92.5656</span></div>
<div style="left:1267px;top:351px;width:69px;height:22px;overflow:hidden"><span class="t" style="left:1.3px;top:6px;color:#000">1.220548</span></div>
<div style="left:1337px;top:351px;width:33px;height:22px;overflow:hidden"><span class="t" style="left:1.3px;top:6px;color:#000">1.221</span></div>
<div style="left:77px;top:374px;width:69px;height:22px;overflow:hidden"><span class="t" style="left:1.3px;top:6px;color:#000">'BJ570753'</span></div>
<div style="left:147px;top:374px;width:69px;height:22px;overflow:hidden"><span class="t" style="left:1.3px;top:6px;color:#000">XS21759...</span></div>
<div style="left:217px;top:374px;width:69px;height:22px;overflow:hidden"><span class="t" style="left:1.3px;top:6px;color:#000">Achmea BV</span></div>
<div style="left:287px;top:374px;width:69px;height:22px;overflow:hidden"><span class="t" style="left:1.3px;top:6px;color:#000">ACHMEA</span></div>
<div style="left:357px;top:374px;width:69px;height:22px;overflow:hidden"><span class="t" style="left:1.3px;top:6px;color:#000">1.5</span></div>
<div style="left:427px;top:374px;width:69px;height:22px;overflow:hidden"><span class="t" style="left:1.3px;top:6px;color:#000">5/26/2027</span></div>
<div style="left:497px;top:374px;width:69px;height:22px;overflow:hidden"><span class="t" style="left:1.3px;top:6px;color:#000">BBB1</span></div>
<div style="left:567px;top:374px;width:69px;height:22px;overflow:hidden"><span class="t" style="left:1.3px;top:6px;color:#000">8</span></div>
<div style="left:637px;top:374px;width:69px;height:22px;overflow:hidden"><span class="t" style="left:1.3px;top:6px;color:#000">EUR</span></div>
<div style="left:707px;top:374px;width:69px;height:22px;overflow:hidden"><span class="t" style="left:1.3px;top:6px;color:#000">NL</span></div>
<div style="left:777px;top:374px;width:69px;height:22px;overflow:hidden"><span class="t" style="left:1.3px;top:6px;color:#000">Corporate</span></div>
<div style="left:847px;top:374px;width:69px;height:22px;overflow:hidden"><span class="t" style="left:1.3px;top:6px;color:#000">Financial</span></div>
<div style="left:917px;top:374px;width:69px;height:22px;overflow:hidden"><span class="t" style="left:1.3px;top:6px;color:#000">Insurance</span></div>
<div style="left:987px;top:374px;width:69px;height:22px;overflow:hidden"><span class="t" style="left:1.3px;top:6px;color:#000">Multi-L...</span></div>
<div style="left:1057px;top:374px;width:69px;height:22px;overflow:hidden"><span class="t" style="left:1.3px;top:6px;color:#000">SENR</span></div>
<div style="left:1127px;top:374px;width:69px;height:22px;overflow:hidden"><span class="t" style="left:1.3px;top:6px;color:#000">757.523...</span></div>
<div style="left:1197px;top:374px;width:69px;height:22px;overflow:hidden"><span class="t" style="left:1.3px;top:6px;color:#000">92.156</span></div>
<div style="left:1267px;top:374px;width:69px;height:22px;overflow:hidden"><span class="t" style="left:1.3px;top:6px;color:#000">1.273973</span></div>
<div style="left:1337px;top:374px;width:33px;height:22px;overflow:hidden"><span class="t" style="left:1.3px;top:6px;color:#000">1.3035</span></div>
<div style="left:77px;top:397px;width:69px;height:22px;overflow:hidden"><span class="t" style="left:1.3px;top:6px;color:#000">'AX048246'</span></div>
<div style="left:147px;top:397px;width:69px;height:22px;overflow:hidden"><span class="t" style="left:1.3px;top:6px;color:#000">XS19539...</span></div>
<div style="left:217px;top:397px;width:69px;height:22px;overflow:hidden"><span class="t" style="left:1.3px;top:6px;color:#000">Acquire...</span></div>
<div style="left:287px;top:397px;width:69px;height:22px;overflow:hidden"><span class="t" style="left:1.3px;top:6px;color:#000">ACQUIU</span></div>
<div style="left:357px;top:397px;width:69px;height:22px;overflow:hidden"><span class="t" style="left:1.3px;top:6px;color:#000">2.8</span></div>
<div style="left:427px;top:397px;width:69px;height:22px;overflow:hidden"><span class="t" style="left:1.3px;top:6px;color:#000">2/20/2026</span></div>
<div style="left:497px;top:397px;width:69px;height:22px;overflow:hidden"><span class="t" style="left:1.3px;top:6px;color:#000">BBB3</span></div>
<div style="left:567px;top:397px;width:69px;height:22px;overflow:hidden"><span class="t" style="left:1.3px;top:6px;color:#000">10</span></div>
<div style="left:637px;top:397px;width:69px;height:22px;overflow:hidden"><span class="t" style="left:1.3px;top:6px;color:#000">EUR</span></div>
<div style="left:707px;top:397px;width:69px;height:22px;overflow:hidden"><span class="t" style="left:1.3px;top:6px;color:#000">ES</span></div>
<div style="left:777px;top:397px;width:69px;height:22px;overflow:hidden"><span class="t" style="left:1.3px;top:6px;color:#000">Corporate</span></div>
<div style="left:847px;top:397px;width:69px;height:22px;overflow:hidden"><span class="t" style="left:1.3px;top:6px;color:#000">Utility</span></div>
<div style="left:917px;top:397px;width:69px;height:22px;overflow:hidden"><span class="t" style="left:1.3px;top:6px;color:#000">Utility</span></div>
<div style="left:987px;top:397px;width:69px;height:22px;overflow:hidden"><span class="t" style="left:1.3px;top:6px;color:#000">Electri...</span></div>
<div style="left:1057px;top:397px;width:69px;height:22px;overflow:hidden"><span class="t" style="left:1.3px;top:6px;color:#000">SENR</span></div>
<div style="left:1127px;top:397px;width:69px;height:22px;overflow:hidden"><span class="t" style="left:1.3px;top:6px;color:#000">504.879...</span></div>
<div style="left:1197px;top:397px;width:69px;height:22px;overflow:hidden"><span class="t" style="left:1.3px;top:6px;color:#000">96.1058</span></div>
<div style="left:1267px;top:397px;width:69px;height:22px;overflow:hidden"><span class="t" style="left:1.3px;top:6px;color:#000">0.306849</span></div>
<div style="left:1337px;top:397px;width:33px;height:22px;overflow:hidden"><span class="t" style="left:1.3px;top:6px;color:#000">0.8965</span></div>
<div style="left:77px;top:420px;width:69px;height:15px;overflow:hidden"><span class="t" style="left:1.3px;top:6px;color:#000">'AS087411'</span></div>
<div style="left:147px;top:420px;width:69px;height:15px;overflow:hidden"><span class="t" style="left:1.3px;top:6px;color:#000">XS17995...</span></div>
<div style="left:217px;top:420px;width:69px;height:15px;overflow:hidden"><span class="t" style="left:1.3px;top:6px;color:#000">Dragado...</span></div>
<div style="left:287px;top:420px;width:69px;height:15px;overflow:hidden"><span class="t" style="left:1.3px;top:6px;color:#000">ACSSCE</span></div>
<div style="left:357px;top:420px;width:69px;height:15px;overflow:hidden"><span class="t" style="left:1.3px;top:6px;color:#000">1.875</span></div>
<div style="left:427px;top:420px;width:69px;height:15px;overflow:hidden"><span class="t" style="left:1.3px;top:6px;color:#000">4/20/2026</span></div>
<div style="left:497px;top:420px;width:69px;height:15px;overflow:hidden"><span class="t" style="left:1.3px;top:6px;color:#000">BBB3</span></div>
<div style="left:567px;top:420px;width:69px;height:15px;overflow:hidden"><span class="t" style="left:1.3px;top:6px;color:#000">10</span></div>
<div style="left:637px;top:420px;width:69px;height:15px;overflow:hidden"><span class="t" style="left:1.3px;top:6px;color:#000">EUR</span></div>
<div style="left:707px;top:420px;width:69px;height:15px;overflow:hidden"><span class="t" style="left:1.3px;top:6px;color:#000">ES</span></div>
<div style="left:777px;top:420px;width:69px;height:15px;overflow:hidden"><span class="t" style="left:1.3px;top:6px;color:#000">Corporate</span></div>
<div style="left:847px;top:420px;width:69px;height:15px;overflow:hidden"><span class="t" style="left:1.3px;top:6px;color:#000">Industr...</span></div>
<div style="left:917px;top:420px;width:69px;height:15px;overflow:hidden"><span class="t" style="left:1.3px;top:6px;color:#000">Basic I...</span></div>
<div style="left:987px;top:420px;width:69px;height:15px;overflow:hidden"><span class="t" style="left:1.3px;top:6px;color:#000">Buildin...</span></div>
<div style="left:1057px;top:420px;width:69px;height:15px;overflow:hidden"><span class="t" style="left:1.3px;top:6px;color:#000">SENR</span></div>
<div style="left:1127px;top:420px;width:69px;height:15px;overflow:hidden"><span class="t" style="left:1.3px;top:6px;color:#000">593.630...</span></div>
<div style="left:1197px;top:420px;width:69px;height:15px;overflow:hidden"><span class="t" style="left:1.3px;top:6px;color:#000">93.575</span></div>
<div style="left:1267px;top:420px;width:69px;height:15px;overflow:hidden"><span class="t" style="left:1.3px;top:6px;color:#000">1.777397</span></div>
<div style="left:1337px;top:420px;width:33px;height:15px;overflow:hidden"><span class="t" style="left:1.3px;top:6px;color:#000">1.0425</span></div>
<div style="left:1371px;top:104px;width:16px;height:331px;background:#f0f0f0;"></div>
<div style="left:1378px;top:120px;width:2px;height:44px;background:#8b8b8b;border-radius:1px;"></div>
<div style="left:26px;top:435px;width:1361px;height:17px;background:#f0f0f0;"></div>
<div style="left:43px;top:443px;width:720px;height:2px;background:#8b8b8b;border-radius:1px;"></div>
<div style="left:25px;top:102px;width:1363px;height:2px;background:#a0a0a0;"></div>
<div style="left:25px;top:102px;width:2px;height:333px;background:#a0a0a0;"></div>
<div style="left:25px;top:435px;width:1px;height:18px;background:#b4b4b4;"></div>
<div style="left:1387px;top:102px;width:1px;height:351px;background:#b4b4b4;"></div>
<div style="left:25px;top:452px;width:1363px;height:1px;background:#b4b4b4;"></div>
<span class="t" style="left:29.3px;top:464px;">Duration</span>
<div class="tb" style="left:88px;top:459px;width:59px;height:21px;"></div>
<span class="t" style="left:89.3px;top:463px;">3.74y</span>
<span class="t" style="left:154.3px;top:464px;">Rating</span>
<div class="tb" style="left:201px;top:459px;width:59px;height:21px;"></div>
<span class="t" style="left:202.3px;top:463px;">A3/BBB1</span>
<span class="t" style="left:266.3px;top:464px;">Max Maturity</span>
<div class="tb" style="left:350px;top:459px;width:69px;height:21px;"></div>
<span class="t" style="left:351.8px;top:463px;">14/02/2042</span>
<span class="t" style="left:426.3px;top:464px;">Max %</span>
<div class="tb" style="left:467px;top:459px;width:59px;height:21px;"></div>
<span class="t" style="left:467.8px;top:463px;">2.50</span>
<span class="t" style="left:533.3px;top:464px;">Max % Sector</span>
<div class="tb" style="left:617px;top:459px;width:59px;height:21px;"></div>
<span class="t" style="left:618.3px;top:463px;">15.00</span>
<span class="t" style="left:683.3px;top:464px;">Min Rating</span>
<div class="tb" style="left:750px;top:459px;width:59px;height:21px;"></div>
<span class="t" style="left:751.3px;top:463px;">BBB3</span>
<span class="t" style="left:817.3px;top:464px;">Max Sub</span>
<div class="tb" style="left:876px;top:459px;width:60px;height:21px;"></div>
<span class="t" style="left:877.3px;top:463px;">5.00</span>
<span class="t" style="left:943.3px;top:464px;">Sub %</span>
<div class="tb" style="left:983px;top:459px;width:60px;height:21px;"></div>
<span class="t" style="left:985.3px;top:463px;">10.69</span>
<span class="t" style="left:1049.3px;top:464px;">Max % AOB</span>
<div class="tb" style="left:1114px;top:459px;width:60px;height:21px;"></div>
<span class="t" style="left:1115.8px;top:463px;">0.55%</span>
<span class="t" style="left:1180.3px;top:464px;">Min $ AO</span>
<div class="tb" style="left:1240px;top:459px;width:59px;height:21px;"></div>
<span class="t" style="left:1241.8px;top:463px;">113600</span>
<span class="t" style="left:32.3px;top:507px;">Portfolio Turnover:</span>
<div class="tb" style="left:31px;top:533px;width:131px;height:21px;"></div>
<span class="t" style="left:32.8px;top:537px;">30.00%</span>
<span class="t" style="left:32.3px;top:571px;">Gain/Loss Crystallised</span>
<div class="tb" style="left:31px;top:597px;width:131px;height:21px;"></div>
<span class="t" style="left:32.8px;top:601px;">-91.43</span>
<span class="t" style="left:32.3px;top:667px;">Amount Sold</span>
<div class="tb" style="left:168px;top:661px;width:113px;height:21px;"></div>
<span class="t" style="left:169.8px;top:665px;">30.00</span>
<div class="tb" style="left:31px;top:691px;width:250px;height:97px;overflow:hidden"><span class="t" style="left:1.2px;top:3px">XS2055647213 1.00099999961281</span><span class="t" style="left:1.2px;top:15px">XS2582860909 1.10449999932252</span><span class="t" style="left:1.2px;top:27px">BE6276040431 2.09499999945111</span><span class="t" style="left:1.2px;top:39px">XS2575971994 1.85949999568077</span><span class="t" style="left:1.2px;top:51px">XS2386592484 0.757999999275586</span><span class="t" style="left:1.2px;top:63px">XS2317288301 0.896499999508722</span><span class="t" style="left:1.2px;top:75px">XS2337326727 0.757499999645161</span><span class="t" style="left:1.2px;top:87px">BE6330288687 0.634499999711356</span><div style="left:0;top:94px;width:231px;height:3px;background:#f0f0f0"></div><div style="left:230px;top:0;width:18px;height:100%;background:#f0f0f0;border-left:1px solid #f8f8f8"></div><div style="left:238px;top:18px;width:2px;height:17px;background:#8b8b8b"></div></div>
<span class="t" style="left:330.6px;top:507px;">Display stats of a numeric column:</span>
<div class="cb" style="left:329px;top:534px;width:291px;height:20px;"></div>
<span class="t" style="left:331.1px;top:538px;">Coupon</span>
<svg style="left:604px;top:541px" width="12" height="8" viewBox="0 0 12 8" fill="none" stroke="#555" stroke-width="1"><path d="M2.6 1.5l4 4 4-4"/></svg>
<span class="t" style="left:332.3px;top:571px;">Maximum</span>
<div class="tb" style="left:477px;top:566px;width:140px;height:21px;"></div>
<span class="t" style="left:529px;top:570px;">8.7500</span>
<span class="t" style="left:332.3px;top:603px;">Minimum</span>
<div class="tb" style="left:477px;top:598px;width:140px;height:21px;"></div>
<span class="t" style="left:529px;top:602px;">0.0000</span>
<span class="t" style="left:332.3px;top:635px;">Simple Average</span>
<div class="tb" style="left:477px;top:630px;width:140px;height:21px;"></div>
<span class="t" style="left:529px;top:634px;">1.8116</span>
<span class="t" style="left:332.3px;top:667px;">Weighted Average</span>
<div class="tb" style="left:477px;top:662px;width:140px;height:21px;"></div>
<span class="t" style="left:529px;top:666px;">2.0171</span>
<span class="t" style="left:332.3px;top:699px;">Standard Deviation</span>
<div class="tb" style="left:477px;top:694px;width:140px;height:21px;"></div>
<span class="t" style="left:529px;top:698px;">1.4238</span>
<span class="t" style="left:330.6px;top:763px;">Draw RHS chart of a non-numeric column:</span>
<div class="cb" style="left:329px;top:792px;width:291px;height:20px;"></div>
<span class="t" style="left:331.1px;top:796px;">Composite Rating</span>
<svg style="left:604px;top:799px" width="12" height="8" viewBox="0 0 12 8" fill="none" stroke="#555" stroke-width="1"><path d="M2.6 1.5l4 4 4-4"/></svg>
<svg style="left:640px;top:495px" width="720" height="300" viewBox="640 495 720 300" shape-rendering="crispEdges"><rect x="697" y="535" width="636" height="1" fill="#000"/><rect x="697" y="578" width="636" height="1" fill="#000"/><rect x="697" y="621" width="636" height="1" fill="#000"/><rect x="697" y="664" width="636" height="1" fill="#000"/><rect x="697" y="706" width="636" height="1" fill="#000"/><rect x="697" y="749" width="636" height="1" fill="#000"/><rect x="705" y="535" width="1" height="218" fill="#000"/><rect x="775" y="535" width="1" height="218" fill="#000"/><rect x="844" y="535" width="1" height="218" fill="#000"/><rect x="914" y="535" width="1" height="218" fill="#000"/><rect x="984" y="535" width="1" height="218" fill="#000"/><rect x="1053" y="535" width="1" height="218" fill="#000"/><rect x="1123" y="535" width="1" height="218" fill="#000"/><rect x="1192" y="535" width="1" height="218" fill="#000"/><rect x="1262" y="535" width="1" height="218" fill="#000"/><rect x="1332" y="535" width="1" height="218" fill="#000"/><rect x="747" y="554" width="55" height="195" fill="#418cf0"/><rect x="816" y="572" width="56" height="177" fill="#418cf0"/><rect x="886" y="615" width="56" height="134" fill="#418cf0"/><rect x="956" y="657" width="55" height="92" fill="#418cf0"/><rect x="1025" y="663" width="56" height="86" fill="#418cf0"/><rect x="1095" y="668" width="56" height="81" fill="#418cf0"/><rect x="1164" y="682" width="56" height="67" fill="#418cf0"/><rect x="1234" y="726" width="56" height="23" fill="#418cf0"/></svg>
<span class="t" style="left:762.5px;top:536px;">BBB3</span>
<span class="s" style="left:744.5px;top:757px;width:60px;text-align:center;font-size:13px;line-height:15px">BBB3</span>
<span class="t" style="left:832px;top:555px;">BBB2</span>
<span class="s" style="left:814px;top:757px;width:60px;text-align:center;font-size:13px;line-height:15px">BBB2</span>
<span class="t" style="left:902px;top:598px;">BBB1</span>
<span class="s" style="left:884px;top:757px;width:60px;text-align:center;font-size:13px;line-height:15px">BBB1</span>
<span class="t" style="left:977.5px;top:639px;">A3</span>
<span class="s" style="left:953.5px;top:757px;width:60px;text-align:center;font-size:13px;line-height:15px">A3</span>
<span class="t" style="left:1047px;top:646px;">A2</span>
<span class="s" style="left:1023px;top:757px;width:60px;text-align:center;font-size:13px;line-height:15px">A2</span>
<span class="t" style="left:1114px;top:650px;">AA3</span>
<span class="s" style="left:1093px;top:757px;width:60px;text-align:center;font-size:13px;line-height:15px">AA3</span>
<span class="t" style="left:1186px;top:664px;">A1</span>
<span class="s" style="left:1162px;top:757px;width:60px;text-align:center;font-size:13px;line-height:15px">A1</span>
<span class="t" style="left:1253px;top:708px;">AA1</span>
<span class="s" style="left:1232px;top:757px;width:60px;text-align:center;font-size:13px;line-height:15px">AA1</span>
<span class="s" style="left:660px;top:527px;width:35px;text-align:right;font-size:13px;line-height:15px">25</span>
<span class="s" style="left:660px;top:570px;width:35px;text-align:right;font-size:13px;line-height:15px">20</span>
<span class="s" style="left:660px;top:613px;width:35px;text-align:right;font-size:13px;line-height:15px">15</span>
<span class="s" style="left:660px;top:656px;width:35px;text-align:right;font-size:13px;line-height:15px">10</span>
<span class="s" style="left:660px;top:698px;width:35px;text-align:right;font-size:13px;line-height:15px">5</span>
<span class="s" style="left:660px;top:741px;width:35px;text-align:right;font-size:13px;line-height:15px">0</span>
<span class="s" style="left:958px;top:504px;width:88px;text-align:center;font-size:10.67px;line-height:13px">Composite Rating</span>
<span class="s" style="left:628px;top:634px;width:60px;text-align:center;font-size:10.67px;line-height:13px;transform:rotate(-90deg)">% Weight</span>
<div style="left:1240px;top:798px;width:96px;height:21px;background:#000;"></div>
<span class="t" style="left:1269.5px;top:803px;color:#fff;">Export</span>
<div id="dlg" style="left:508px;top:310px;width:397px;height:215px;background:#fff;border:1px solid #b9b9b9;border-radius:8px;box-shadow:0 20px 38px rgba(0,0,0,.22),0 2px 6px rgba(0,0,0,.06);overflow:hidden">
<div style="left:0px;top:0px;width:395px;height:30px;background:#f3f3f3;"></div>
<div style="left:8px;top:6px;width:16px;height:16px;background:#752fa8;"><span class="s" style="left:1px;top:2px;font-size:10px;line-height:10px;color:#eadcf8;transform:scaleX(.66);transform-origin:0 0">SCR</span><div style="left:2px;top:12px;width:12px;height:1px;background:#9362c4"></div></div>
<span class="s" style="left:30px;top:8px;font-size:12px;line-height:15px;color:#8a8a8a;transform:scaleX(.83);transform-origin:0 0">SUCCESS</span>
<svg style="left:374.5px;top:8.5px" width="12" height="12" viewBox="0 0 12 12" fill="none" stroke="#c8c8c8" stroke-width="1"><path d="M1 1l10 10M11 1L1 11"/></svg>
<span class="t" style="left:12.8px;top:72px;">YTW before: 4.31 vs after: 5.43 at 30.00% turnover</span>
<div style="left:306px;top:175px;width:73px;height:21px;background:#000;"></div>
<span class="t" style="left:336px;top:180px;color:#fff;">OK</span>
<div style="left:391px;top:203px;width:2px;height:2px;background:#bdbdbd"></div><div style="left:388px;top:206px;width:2px;height:2px;background:#bdbdbd"></div><div style="left:391px;top:206px;width:2px;height:2px;background:#bdbdbd"></div><div style="left:385px;top:209px;width:2px;height:2px;background:#bdbdbd"></div><div style="left:388px;top:209px;width:2px;height:2px;background:#bdbdbd"></div><div style="left:391px;top:209px;width:2px;height:2px;background:#bdbdbd"></div>
</div>
</div></body></html>
